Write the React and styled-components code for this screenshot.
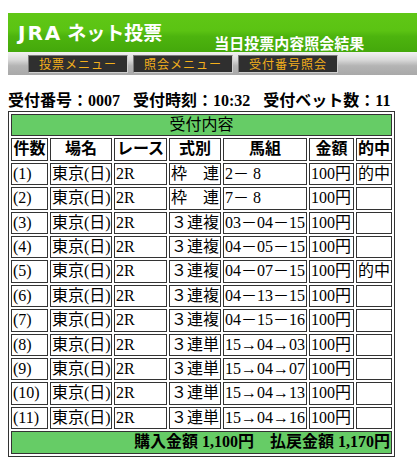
import styled, { createGlobalStyle } from 'styled-components'

const GlobalStyle = createGlobalStyle`
  html, body {
    margin: 0;
    padding: 0;
    background: #fff;
    overflow: hidden;
  }
  body {
    font-family: "Liberation Serif", "Noto Sans CJK JP", serif;
    color: #000;
  }
`

const Page = styled.div`
  padding: 13px 0 0 8px;
`

const Banner = styled.div`
  height: 39px;
  display: flex;
  align-items: flex-end;
  background: linear-gradient(#60c716 0%, #5bc313 45%, #4db40e 60%, #44a80b 100%);
`

const Logo = styled.div`
  display: flex;
  align-items: baseline;
  color: #fff;
  padding: 0 0 9px 10px;
  line-height: 1;
`

const LogoLatin = styled.span`
  font-family: "DejaVu Sans", sans-serif;
  font-weight: bold;
  font-size: 20px;
  letter-spacing: 2px;
`

const LogoKana = styled.span`
  font-family: "Noto Sans CJK JP", sans-serif;
  font-weight: bold;
  font-size: 19px;
  margin-left: 5px;
`

const Subtitle = styled.div`
  font-family: "Noto Sans CJK JP", sans-serif;
  font-weight: bold;
  font-size: 15px;
  line-height: 1;
  color: #fff;
  margin: 0 0 2px 52px;
`

const MenuBar = styled.div`
  height: 23px;
  display: flex;
  align-items: center;
  gap: 5px;
  padding-left: 20px;
  background: linear-gradient(#f2f2f2 0%, #d8d8d8 35%, #b4b4b4 60%, #a9a9a9 100%);
`

const MenuButton = styled.div`
  width: 98px;
  height: 16px;
  display: flex;
  align-items: center;
  justify-content: center;
  background: #2f2f2f;
  border: 1px solid #7a7a7a;
  border-right-color: #cfcfcf;
  border-bottom-color: #cfcfcf;
  color: #f4b01c;
  font-family: "Noto Sans CJK JP", sans-serif;
  font-size: 12px;
  letter-spacing: 1px;
  line-height: 1;
`

const Info = styled.div`
  margin-top: 16px;
  font-weight: bold;
  font-size: 16px;
  line-height: 20px;
  height: 20px;
  white-space: nowrap;
`

const InfoItem = styled.span`
  margin-left: ${p => (p.$first ? '0' : '13px')};
`

const Table = styled.table`
  border: 1px solid #333;
  border-spacing: 2px;
  table-layout: fixed;
  width: 387px;
  font-size: 16px;
`

const Cell = styled.td`
  border: 1px solid #333;
  padding: 1px;
  line-height: 18.4px;
  white-space: nowrap;
  overflow: hidden;
  text-align: ${p => p.$align || 'left'};
  font-weight: ${p => (p.$bold ? 'bold' : 'normal')};
  background: ${p => (p.$green ? '#66cc66' : 'transparent')};
`

const widths = [37, 62, 53, 52, 84, 45, 36]
const heads = ['件数', '場名', 'レース', '式別', '馬組', '金額', '的中']

const bets = [
  ['枠　連', '2－ 8', '的中'],
  ['枠　連', '7－ 8', ''],
  ['３連複', '03－04－15', ''],
  ['３連複', '04－05－15', ''],
  ['３連複', '04－07－15', '的中'],
  ['３連複', '04－13－15', ''],
  ['３連複', '04－15－16', ''],
  ['３連単', '15→04→03', ''],
  ['３連単', '15→04→07', ''],
  ['３連単', '15→04→13', ''],
  ['３連単', '15→04→16', ''],
]

export default function App() {
  return (
    <Page>
      <GlobalStyle />
      <Banner>
        <Logo>
          <LogoLatin>JRA</LogoLatin>
          <LogoKana>ネット投票</LogoKana>
        </Logo>
        <Subtitle>当日投票内容照会結果</Subtitle>
      </Banner>
      <MenuBar>
        <MenuButton>投票メニュー</MenuButton>
        <MenuButton>照会メニュー</MenuButton>
        <MenuButton>受付番号照会</MenuButton>
      </MenuBar>
      <Info>
        <InfoItem $first>受付番号：0007</InfoItem>
        <InfoItem>受付時刻：10:32</InfoItem>
        <InfoItem>受付ベット数：11</InfoItem>
      </Info>
      <Table>
        <colgroup>
          {widths.map((w, i) => (
            <col key={i} style={{ width: w }} />
          ))}
        </colgroup>
        <tbody>
          <tr>
            <Cell colSpan={7} $align="center" $green>受付内容</Cell>
          </tr>
          <tr>
            {heads.map(h => (
              <Cell key={h} $align="center" $bold>{h}</Cell>
            ))}
          </tr>
          {bets.map(([type, combo, hit], i) => (
            <tr key={i}>
              <Cell>({i + 1})</Cell>
              <Cell>東京(日)</Cell>
              <Cell>2R</Cell>
              <Cell>{type}</Cell>
              <Cell>{combo}</Cell>
              <Cell>100円</Cell>
              <Cell>{hit}</Cell>
            </tr>
          ))}
          <tr>
            <Cell colSpan={7} $align="right" $bold $green>
              購入金額 1,100円　払戻金額 1,170円
            </Cell>
          </tr>
        </tbody>
      </Table>
    </Page>
  )
}
